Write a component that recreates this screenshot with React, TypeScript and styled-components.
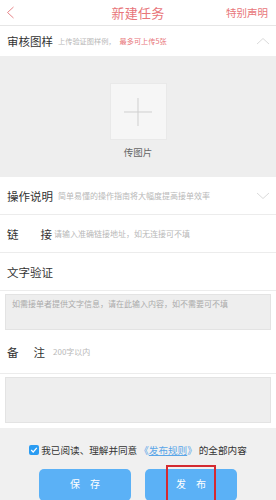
import React from "react";
import styled, { createGlobalStyle } from "styled-components";

const Global = createGlobalStyle`
  html, body { margin: 0; padding: 0; background: #fff; }
  body { font-family: "Noto Sans CJK SC", "Noto Sans", sans-serif; overflow: hidden; }
  * { box-sizing: border-box; }
`;

const Page = styled.div`
  width: 276px;
  display: flex;
  flex-direction: column;
  background: #fff;
`;

const Header = styled.div`
  height: 26px;
  display: grid;
  grid-template-columns: 60px 1fr 60px;
  align-items: center;
  border-bottom: 1px solid #e6e6e6;
  color: #e8767a;
`;

const Back = styled.div`
  padding-left: 6px;
  display: flex;
  align-items: center;
`;

const Title = styled.div`
  text-align: center;
  font-size: 13px;
  letter-spacing: 0.2px;
`;

const HeaderLink = styled.div`
  text-align: right;
  padding-right: 8px;
  font-size: 10.5px;
  white-space: nowrap;
`;

const Row = styled.div<{ $h: number; $border?: boolean }>`
  height: ${(p) => p.$h}px;
  display: flex;
  align-items: center;
  padding: 0 6px 0 7px;
  border-bottom: ${(p) => (p.$border ? "1px solid #ececec" : "none")};
`;

const Label = styled.div<{ $w?: number }>`
  font-size: 11.5px;
  color: #333;
  width: ${(p) => (p.$w ? `${p.$w}px` : "auto")};
  display: flex;
  justify-content: ${(p) => (p.$w ? "space-between" : "flex-start")};
  white-space: nowrap;
  flex-shrink: 0;
`;

const Hint = styled.div<{ $size?: number; $gap?: number }>`
  font-size: ${(p) => p.$size ?? 8}px;
  color: #b8b8b8;
  margin-left: ${(p) => p.$gap ?? 5}px;
  white-space: nowrap;
  flex: 1;
`;

const Red = styled.span`
  color: #e8767a;
  margin-left: 4px;
`;

const Chevron = styled.svg`
  width: 14px;
  height: 8px;
  flex-shrink: 0;
`;

const UploadArea = styled.div`
  height: 121px;
  background: #eeeeee;
  display: flex;
  flex-direction: column;
  align-items: center;
  padding-top: 27px;
`;

const UploadBox = styled.div`
  width: 57px;
  height: 57px;
  background: #f6f6f6;
  border: 1px solid #e9e9e9;
  display: flex;
  align-items: center;
  justify-content: center;
`;

const UploadLabel = styled.div`
  margin-top: 5px;
  font-size: 9.5px;
  color: #666;
`;

const TextBox = styled.div<{ $h: number }>`
  margin: 3px 5px 0;
  height: ${(p) => p.$h}px;
  background: #eeeeee;
  border: 1px solid #e3e3e3;
  padding: 3px 6px;
  font-size: 8px;
  color: #aaa;
`;

const Footer = styled.div`
  margin-top: 5px;
  background: #f0f0f0;
  height: 110px;
  display: flex;
  flex-direction: column;
  align-items: center;
  padding-top: 15px;
`;

const Agree = styled.div`
  display: flex;
  align-items: center;
  font-size: 9.6px;
  color: #333;
  white-space: nowrap;
`;

const Check = styled.div`
  width: 10px;
  height: 10px;
  border-radius: 2px;
  background: #2b9cf2;
  margin-right: 2px;
  display: flex;
  align-items: center;
  justify-content: center;
`;

const RuleLink = styled.span`
  color: #5aa6e8;
  margin: 0 2px;
  span { text-decoration: underline; }
`;

const Buttons = styled.div`
  display: flex;
  gap: 14px;
  margin-top: 12px;
`;

const Button = styled.div`
  position: relative;
  width: 92px;
  height: 32px;
  border-radius: 5px;
  background: #5bb1f6;
  color: #fff;
  font-size: 10px;
  display: flex;
  align-items: center;
  justify-content: center;
  padding-bottom: 4px;
  letter-spacing: 10px;
  text-indent: 10px;
`;

const Highlight = styled.div`
  position: absolute;
  left: 21px;
  top: -4px;
  width: 50px;
  height: 40px;
  border: 2px solid #d42a30;
`;

export default function App() {
  return (
    <>
      <Global />
      <Page>
        <Header>
          <Back>
            <svg width="9" height="13" viewBox="0 0 9 13">
              <path d="M7.5 1 L1.5 6.5 L7.5 12" fill="none" stroke="#e8868a" strokeWidth="1" />
            </svg>
          </Back>
          <Title>新建任务</Title>
          <HeaderLink>特别声明</HeaderLink>
        </Header>
        <Row $h={30}>
          <Label>审核图样</Label>
          <Hint $size={7.2}>
            上传验证图样例，<Red>最多可上传5张</Red>
          </Hint>
          <Chevron viewBox="0 0 14 8">
            <path d="M1 7 L7 1.5 L13 7" fill="none" stroke="#d0d0d0" strokeWidth="0.8" />
          </Chevron>
        </Row>
        <UploadArea>
          <UploadBox>
            <svg width="30" height="30" viewBox="0 0 30 30">
              <path d="M15 1 V29 M1 15 H29" stroke="#cfcfcf" strokeWidth="1" />
            </svg>
          </UploadBox>
          <UploadLabel>传图片</UploadLabel>
        </UploadArea>
        <Row $h={38} $border>
          <Label>操作说明</Label>
          <Hint>简单易懂的操作指南将大幅度提高接单效率</Hint>
          <Chevron viewBox="0 0 14 8">
            <path d="M1 1 L7 6.5 L13 1" fill="none" stroke="#d0d0d0" strokeWidth="0.8" />
          </Chevron>
        </Row>
        <Row $h={38} $border>
          <Label $w={45}>
            <span>链</span>
            <span>接</span>
          </Label>
          <Hint $gap={2}>请输入准确链接地址，如无连接可不填</Hint>
        </Row>
        <Row $h={38} $border>
          <Label>文字验证</Label>
        </Row>
        <TextBox $h={36}>如需接单者提供文字信息，请在此输入内容，如不需要可不填</TextBox>
        <Row $h={44} $border>
          <Label $w={38}>
            <span>备</span>
            <span>注</span>
          </Label>
          <Hint $gap={8}>200字以内</Hint>
        </Row>
        <TextBox $h={46} />
        <Footer>
          <Agree>
            <Check>
              <svg width="8" height="8" viewBox="0 0 8 8">
                <path d="M1.2 4 L3.2 6 L6.8 1.8" fill="none" stroke="#fff" strokeWidth="1.2" />
              </svg>
            </Check>
            我已阅读、理解并同意
            <RuleLink>
              《<span>发布规则</span>》
            </RuleLink>
            的全部内容
          </Agree>
          <Buttons>
            <Button>保存</Button>
            <Button>
              发布
              <Highlight />
            </Button>
          </Buttons>
        </Footer>
      </Page>
    </>
  );
}
